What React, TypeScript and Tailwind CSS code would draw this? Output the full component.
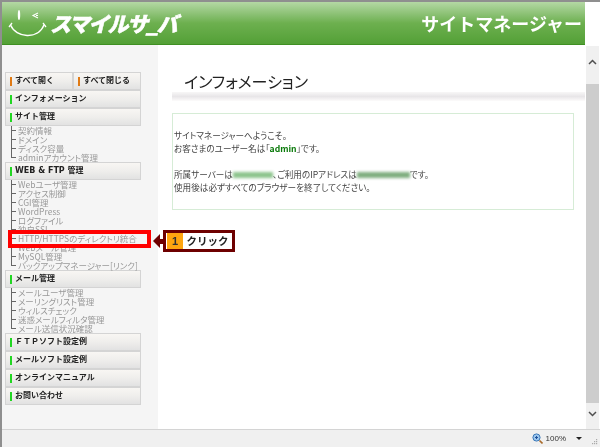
import React from "react";

const font = "[font-family:'Noto_Sans_CJK_JP','Noto_Sans',sans-serif]";

function NavHead({ label, color = "bg-[#22d622]", className = "" }: { label: string; color?: string; className?: string }) {
  return (
    <div className={`h-[18px] flex items-center pl-[4px] gap-[3px] border border-[#d4d4d4] bg-gradient-to-b from-[#f8f6f3] via-[#efeeec] to-[#e2e2e2] ${className}`}>
      <span className={`w-[2px] h-[9px] shrink-0 ${color}`} />
      <span className="text-[8px] leading-[10px] font-bold text-[#222] whitespace-nowrap [font-family:'DejaVu_Sans','Noto_Sans_CJK_JP',sans-serif]">{label}</span>
    </div>
  );
}

function Links({ items }: { items: string[] }) {
  return (
    <ul className="pl-[6px]">
      {items.map((t, i) => (
        <li key={t} className="flex h-[9px] items-center">
          <span className={`relative w-[7px] shrink-0 border-l border-[#666] ${i === items.length - 1 ? "h-[5px] self-start" : "h-[9px]"}`}>
            <span className="absolute left-0 top-[4px] w-[4px] h-px bg-[#666]" />
          </span>
          <span className="text-[8.5px] leading-[9px] text-[#999] whitespace-nowrap [font-feature-settings:'palt']">{t}</span>
        </li>
      ))}
    </ul>
  );
}

function Sidebar() {
  return (
    <aside className="w-[156px] shrink-0 bg-[#f5f5f5] pt-[27px] pl-[3px]">
      <div className="w-[136px]">
        <div className="flex">
          <NavHead label="すべて開く" color="bg-[#e07a14]" className="w-[68px]" />
          <NavHead label="すべて閉じる" color="bg-[#e07a14]" className="w-[68px]" />
        </div>
        <NavHead label="インフォメーション" />
        <NavHead label="サイト管理" />
        <Links items={["契約情報", "ドメイン", "ディスク容量", "adminアカウント管理"]} />
        <NavHead label="WEB & FTP 管理" />
        <Links items={["Webユーザ管理", "アクセス制御", "CGI管理", "WordPress", "ログファイル", "独自SSL", "HTTP/HTTPSのディレクトリ統合", "Webメール管理", "MySQL管理", "バックアップマネージャー[リンク]"]} />
        <NavHead label="メール管理" />
        <Links items={["メールユーザ管理", "メーリングリスト管理", "ウィルスチェック", "迷惑メールフィルタ管理", "メール送信状況確認"]} />
        <NavHead label="ＦＴＰソフト設定例" />
        <NavHead label="メールソフト設定例" />
        <NavHead label="オンラインマニュアル" />
        <NavHead label="お問い合わせ" />
      </div>
    </aside>
  );
}

function Header() {
  return (
    <header className="h-[43px] mr-[15px] flex items-center justify-between pl-[5px] pr-[3px] border-b border-[#3f8f22] bg-gradient-to-b from-[#b4d8a4] via-[#6db04f] to-[#53a036]">
      <div className="flex items-center">
        <svg width="40" height="30" viewBox="0 0 40 30" fill="none" stroke="#fff" className="shrink-0">
          <ellipse cx="12" cy="7" rx="1.2" ry="5" fill="#fff" stroke="none" />
          <path d="M31 5 L26 7.5 L31 10 M29 7.5 H31" strokeWidth="1.1" />
          <path d="M3.5 17 C9 30 31 32 37 17" strokeWidth="1.4" />
          <path d="M2 19 L5 15 M36 15 L39 19" strokeWidth="1.3" />
        </svg>
        <span className="ml-[3px] text-[21px] leading-none font-black italic text-white tracking-[-1.6px] whitespace-nowrap [-webkit-text-stroke:0.5px_white]">スマイルサ_バ</span>
      </div>
      <span className="text-[18px] leading-none font-bold text-white whitespace-nowrap">サイトマネージャー</span>
    </header>
  );
}

function Main() {
  return (
    <main className="flex-1 pl-[14px] pr-[1px]">
      <h1 className="pl-[12px] pt-[25px] h-[47px] text-[16px] leading-[22px] text-[#222] whitespace-nowrap [font-feature-settings:'palt']">インフォメーション</h1>
      <div className="h-[9px] bg-gradient-to-b from-[#f8f7f7] via-[#e8e6e8] to-[#fcfbfb]" />
      <div className="mt-[12px] w-[402px] h-[97px] border border-[#d6ecd6] pl-[1px] pt-[15px] text-[8.6px] leading-[13px] text-[#444] [font-feature-settings:'palt']">
        <p>サイトマネージャーへようこそ。</p>
        <p>お客さまのユーザー名は「<b className="text-[#0a7a0a]">admin</b>」です。</p>
        <p className="mt-[13px] flex items-center">
          所属サーバーは
          <span className="inline-block w-[40px] h-[6px] bg-[#8cc48c] blur-[1.5px]" />
          、ご利用のIPアドレスは
          <span className="inline-block w-[53px] h-[6px] bg-[#7fae7f] blur-[1.5px]" />
          です。
        </p>
        <p>使用後は必ずすべてのブラウザーを終了してください。</p>
      </div>
    </main>
  );
}

function Scrollbar() {
  return (
    <div className="w-[13px] mt-[1px] mr-[1px] bg-[#f0f0f0] flex flex-col items-center">
      <svg width="9" height="6" viewBox="0 0 9 6" fill="none" stroke="#505050" strokeWidth="1.5" className="mt-[13px]"><path d="M1 5 L4.5 1.5 L8 5" /></svg>
      <div className="mt-[19px] w-full h-[319px] bg-[#cdcdcd]" />
      <svg width="9" height="6" viewBox="0 0 9 6" fill="none" stroke="#505050" strokeWidth="1.5" className="mt-[8px]"><path d="M1 1 L4.5 4.5 L8 1" /></svg>
    </div>
  );
}

function StatusBar() {
  return (
    <footer className="h-[18px] border-t border-[#d4d4d4] bg-[#f0f0f0] flex items-center justify-end pr-[2px]">
      <svg width="11" height="11" viewBox="0 0 11 11" className="mr-[3px]">
        <circle cx="4.5" cy="4.5" r="3.6" fill="#9cc7ee" stroke="#3b78b8" />
        <path d="M3 4.5 H6 M4.5 3 V6" stroke="#1f4f99" />
        <path d="M7.5 7.5 L10.5 10.5" stroke="#a86a2a" strokeWidth="1.6" />
      </svg>
      <span className="text-[8px] leading-none text-[#333] [font-family:'Liberation_Sans',sans-serif]">100%</span>
      <span className="ml-[10px] w-0 h-0 border-x-[3px] border-x-transparent border-t-[3px] border-t-[#222]" />
      <svg width="7" height="7" viewBox="0 0 7 7" fill="#aaa" className="ml-[9px] self-end mb-[2px]">
        <rect x="5" y="1" width="1.2" height="1.2" /><rect x="3" y="3" width="1.2" height="1.2" /><rect x="5" y="3" width="1.2" height="1.2" />
        <rect x="1" y="5" width="1.2" height="1.2" /><rect x="3" y="5" width="1.2" height="1.2" /><rect x="5" y="5" width="1.2" height="1.2" />
      </svg>
    </footer>
  );
}

function Callout() {
  return (
    <>
      <div className="absolute left-[6px] top-[228px] w-[143px] h-[18px] border-[4px] border-[#ff0000]" />
      <div className="absolute left-[151px] top-[228px] flex items-center">
        <span className="w-0 h-0 border-y-[7px] border-y-transparent border-r-[7px] border-r-[#6e0000]" />
        <span className="w-[3px] h-[5px] bg-[#6e0000]" />
        <div className="flex h-[22px] w-[72px] border-[3px] border-[#6e0000] bg-white">
          <span className="ml-[1px] w-[16px] bg-[#ffa50f] flex items-center justify-center text-[11px] font-bold text-[#333] [font-family:'Liberation_Sans',sans-serif]">1</span>
          <span className="flex-1 flex items-center justify-center text-[10.5px] font-bold leading-none text-[#222]">クリック</span>
        </div>
      </div>
    </>
  );
}

export default function App() {
  return (
    <div className={`relative w-[600px] h-[447px] overflow-hidden bg-white flex flex-col border-l-2 border-t-2 border-[#8f8f8f] blur-[0.35px] ${font}`}>
      <Header />
      <div className="flex flex-1 min-h-0">
        <div className="flex flex-1 min-w-0">
          <Sidebar />
          <Main />
        </div>
        <Scrollbar />
      </div>
      <StatusBar />
      <Callout />
    </div>
  );
}
